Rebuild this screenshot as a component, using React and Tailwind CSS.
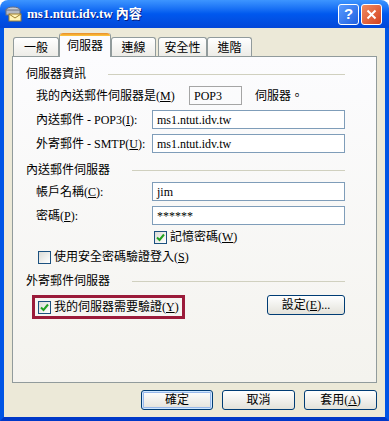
import React from 'react';

const font = { fontFamily: '"Liberation Serif", "Noto Sans CJK TC", serif' };

const Header = ({ children, mt }) => (
  <div className={`flex items-center h-[16px] ${mt}`}>
    <span className="whitespace-nowrap">{children}</span>
    <div className="ml-[22px] flex-1 h-px bg-[#D0D0BF]" />
  </div>
);

const Input = ({ value }) => (
  <div className="w-[193px] h-[19px] border border-[#7F9DB9] bg-white px-[4px] flex items-center text-[12px] text-black">
    {value}
  </div>
);

const Check = ({ checked }) => (
  <div className="w-[13px] h-[13px] border border-[#1C5180] bg-gradient-to-br from-[#DCDCD7] to-white flex items-center justify-center shrink-0">
    {checked && (
      <svg width="9" height="9" viewBox="0 0 9 9">
        <path d="M1 4.5 L3.5 7 L8 1.5" fill="none" stroke="#21A121" strokeWidth="2" />
      </svg>
    )}
  </div>
);

const Button = ({ children, w, primary }) => (
  <div
    className={`${w} h-[20px] rounded-[3px] border border-[#003C74] bg-gradient-to-b from-white to-[#E3E2DA] flex items-center justify-center text-[12px] text-black ${
      primary ? 'shadow-[inset_0_0_0_1px_#CEE7FF,inset_0_0_0_2px_#98B8EA]' : ''
    }`}
  >
    {children}
  </div>
);

const Tab = ({ label, w, active, ml }) =>
  active ? (
    <div className={`relative z-10 ${w} ${ml} h-[24px] bg-[#FCFCFE] border-x border-[#919B9C] rounded-t-[3px] flex flex-col`}>
      <div className="h-[3px] bg-gradient-to-b from-[#E68B2C] to-[#FFC83C] rounded-t-[3px]" />
      <div className="flex-1 flex items-center justify-center pb-[2px]">{label}</div>
    </div>
  ) : (
    <div className={`${w} ${ml} h-[20px] border border-b-0 border-[#919B9C] rounded-t-[3px] bg-gradient-to-b from-white to-[#ECEBE6] flex items-center justify-center`}>
      {label}
    </div>
  );

const TitleIcon = () => (
  <svg width="17" height="16" viewBox="0 0 17 16">
    <ellipse cx="8" cy="4" rx="7" ry="3" fill="#C8CCD4" stroke="#6A7080" />
    <rect x="1" y="4" width="14" height="5" fill="#B4B9C4" stroke="#6A7080" />
    <rect x="4" y="8" width="12" height="7" fill="#FFF3B8" stroke="#A08030" />
    <path d="M4 8 L10 12 L16 8" fill="none" stroke="#A08030" />
  </svg>
);

export default function App() {
  return (
    <div className="w-[389px] h-[421px] flex flex-col text-[12px] text-black" style={font}>
      {/* title bar */}
      <div className="h-[28px] rounded-t-[8px] bg-gradient-to-b from-[#3D95FF] via-[#0058EE] to-[#0347D8] flex items-center pl-[5px] pr-[7px]">
        <TitleIcon />
        <span className="ml-[5px] text-white font-bold text-[13px] [text-shadow:1px_1px_0_#0A1E80]">ms1.ntut.idv.tw 內容</span>
        <div className="ml-auto flex gap-[2px]">
          <div className="w-[21px] h-[21px] rounded-[3px] border border-white bg-gradient-to-br from-[#5A9BFF] to-[#1F5FE0] flex items-center justify-center text-white font-bold text-[15px]" style={{ fontFamily: '"Liberation Sans", sans-serif' }}>
            ?
          </div>
          <div className="w-[21px] h-[21px] rounded-[3px] border border-white bg-gradient-to-br from-[#F08A60] to-[#D4401C] flex items-center justify-center">
            <svg width="11" height="11" viewBox="0 0 11 11">
              <path d="M1.5 1.5 L9.5 9.5 M9.5 1.5 L1.5 9.5" stroke="white" strokeWidth="2" />
            </svg>
          </div>
        </div>
      </div>

      {/* body */}
      <div className="flex-1 flex flex-col bg-[#ECE9D8] border-x-4 border-b-4 border-x-[#0055E5] border-b-[#0038C8] px-[8px] pt-[5px] pb-[7px]">
        <div className="flex items-end h-[24px]">
          <Tab label="一般" w="w-[46px]" ml="ml-[1px]" />
          <Tab label="伺服器" w="w-[52px]" active />
          <Tab label="連線" w="w-[45px]" />
          <Tab label="安全性" w="w-[49px]" ml="ml-[2px]" />
          <Tab label="進階" w="w-[45px]" />
        </div>

        <div className="-mt-px h-[327px] border border-[#919B9C] bg-gradient-to-b from-[#FCFCFE] to-[#F4F3EE] pl-[13px] pr-[31px] flex flex-col">
          <Header mt="mt-[9px]">伺服器資訊</Header>

          <div className="ml-[10px] mt-[4px] h-[19px] flex items-center">
            <span className="w-[153px]">
              我的內送郵件伺服器是(<u>M</u>)
            </span>
            <div className="w-[53px] h-[19px] border border-[#A5A5A5] px-[4px] flex items-center">POP3</div>
            <span className="ml-[13px]">伺服器。</span>
          </div>

          <div className="ml-[10px] mt-[5px] flex items-center">
            <span className="w-[116px]">
              內送郵件 - POP3(<u>I</u>):
            </span>
            <Input value="ms1.ntut.idv.tw" />
          </div>

          <div className="ml-[10px] mt-[5px] flex items-center">
            <span className="w-[116px]">
              外寄郵件 - SMTP(<u>U</u>):
            </span>
            <Input value="ms1.ntut.idv.tw" />
          </div>

          <Header mt="mt-[9px]">內送郵件伺服器</Header>

          <div className="ml-[10px] mt-[4px] flex items-center">
            <span className="w-[116px]">
              帳戶名稱(<u>C</u>):
            </span>
            <Input value="jim" />
          </div>

          <div className="ml-[10px] mt-[5px] flex items-center">
            <span className="w-[116px]">
              密碼(<u>P</u>):
            </span>
            <Input value="******" />
          </div>

          <div className="ml-[128px] mt-[5px] h-[14px] flex items-center gap-[3px]">
            <Check checked />
            <span>
              記憶密碼(<u>W</u>)
            </span>
          </div>

          <div className="ml-[12px] mt-[6px] h-[14px] flex items-center gap-[3px]">
            <Check />
            <span>
              使用安全密碼驗證登入(<u>S</u>)
            </span>
          </div>

          <Header mt="mt-[9px]">外寄郵件伺服器</Header>

          <div className="mt-[6px] flex items-start">
            <div className="ml-[6px] w-[153px] h-[24px] border-[3px] border-[#9B1B3A] flex items-center pl-[3px] gap-[3px]">
              <Check checked />
              <span>
                我的伺服器需要驗證(<u>Y</u>)
              </span>
            </div>
            <div className="ml-auto">
              <Button w="w-[78px]">
                設定(<u>E</u>)...
              </Button>
            </div>
          </div>
        </div>

        <div className="mt-[7px] flex justify-end gap-[9px]">
          <Button w="w-[72px]" primary>
            確定
          </Button>
          <Button w="w-[73px]">取消</Button>
          <Button w="w-[73px]">
            套用(<u>A</u>)
          </Button>
        </div>
      </div>
    </div>
  );
}
